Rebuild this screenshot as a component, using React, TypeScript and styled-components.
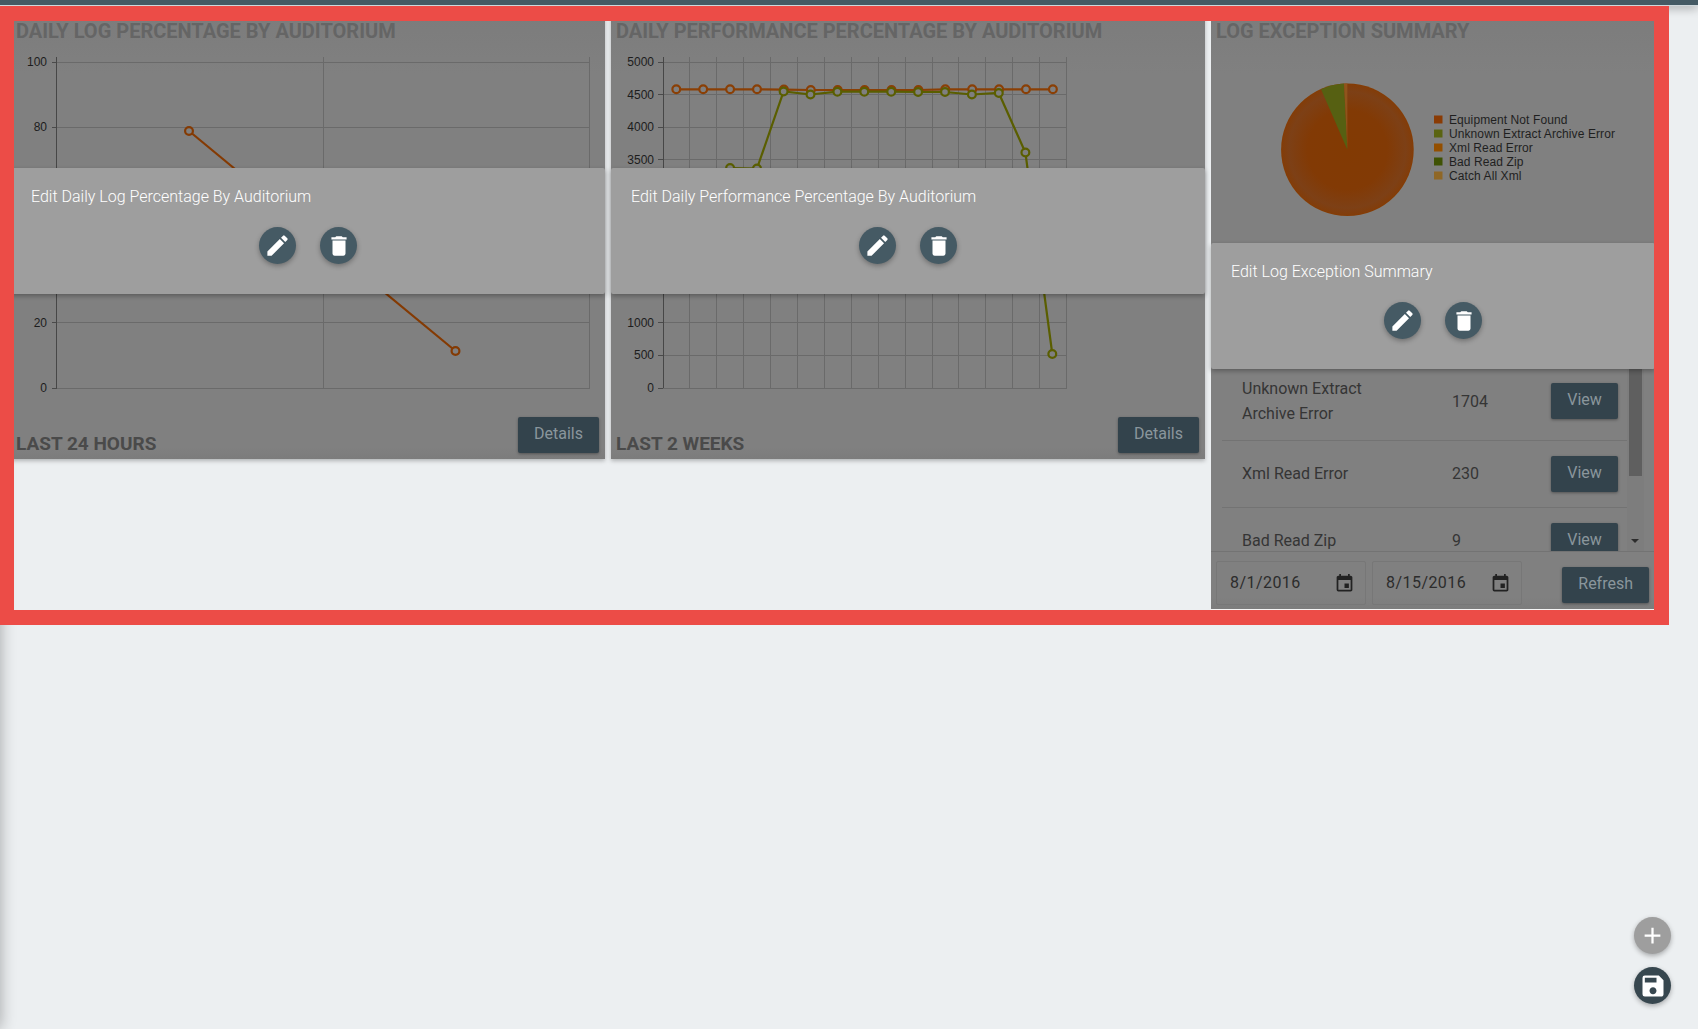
import React from "react";
import styled, { createGlobalStyle } from "styled-components";
import { MdEdit, MdDelete, MdEvent, MdAdd, MdSave } from "react-icons/md";

const Global = createGlobalStyle`
  html, body { margin: 0; padding: 0; height: 100%; overflow: hidden; background: #eceff1; }
  body { font-family: Roboto, "Liberation Sans", sans-serif; }
`;

const Page = styled.div`
  position: relative;
  width: 1698px;
  height: 1029px;
  overflow: hidden;
`;
const HiddenDrawer = styled.aside`
  position: absolute;
  top: 0;
  left: -16px;
  width: 16px;
  height: 100%;
  box-shadow: 0 0 16px rgba(0, 0, 0, 0.32);
`;
const TopBar = styled.header`
  position: relative;
  z-index: 2;
  height: 5px;
  background: #455a64;
  border-bottom: 1px solid #cfd8dc;
  box-shadow: 0 2px 10px rgba(0, 0, 0, 0.35);
`;
const Board = styled.main`
  display: grid;
  grid-template-columns: 594px 594px 444px;
  column-gap: 6px;
  align-items: start;
  margin-top: -3px;
  padding-left: 11px;
`;
const Card = styled.section<{ $h: number; $line?: boolean }>`
  position: relative;
  display: flex;
  flex-direction: column;
  height: ${(p) => p.$h}px;
  box-sizing: border-box;
  background: linear-gradient(#7b7b7b 0, #808080 70px, #808080 calc(100% - 12px), #7c7c7c 100%);
  box-shadow: ${(p) => (p.$line ? "0 1px 0 #f4f4f4" : "0 2px 4px rgba(0, 0, 0, 0.25)")};
`;
const Title = styled.h2`
  margin: 0;
  padding: 16px 5px 7px;
  font-size: 20px;
  line-height: 24px;
  font-weight: 700;
  color: #656565;
  text-transform: uppercase;
  white-space: nowrap;
`;
const ChartSvg = styled.svg`
  display: block;
  flex: none;
  font-family: "Liberation Sans", Arial, sans-serif;
  font-size: 12px;
`;
const CardFoot = styled.div`
  flex: 1;
  display: flex;
  justify-content: space-between;
  padding: 17px 6px 6px 5px;
`;
const Period = styled.div`
  align-self: flex-end;
  margin-bottom: -3px;
  font-size: 19px;
  line-height: 24px;
  font-weight: 700;
  color: #4a4a4a;
  text-transform: uppercase;
`;
const ActionButton = styled.button`
  flex: none;
  height: 36px;
  padding: 0 16px 2px;
  border: 0;
  border-radius: 2px;
  background: #33434c;
  color: #8a969c;
  font: 400 16px/34px Roboto, sans-serif;
  box-shadow: 0 1px 3px rgba(0, 0, 0, 0.35);
`;
const EditOverlay = styled.div`
  position: absolute;
  left: 0;
  right: 0;
  top: 50%;
  transform: translateY(-50%);
  height: 126px;
  background: #9e9e9e;
  border-radius: 2px;
  box-shadow: 0 2px 5px rgba(0, 0, 0, 0.3);
  color: #fff;
`;
const EditTitle = styled.div`
  padding: 19px 20px 0;
  font-size: 16px;
  line-height: 19px;
  font-weight: 300;
`;
const EditActions = styled.div`
  display: flex;
  justify-content: center;
  gap: 24px;
  margin-top: 21px;
`;
const RoundButton = styled.button<{ $bg?: string }>`
  display: flex;
  align-items: center;
  justify-content: center;
  width: 37px;
  height: 37px;
  padding: 0;
  border: 0;
  border-radius: 50%;
  background: ${(p) => p.$bg || "#455a64"};
  color: #fff;
  box-shadow: 0 2px 5px rgba(0, 0, 0, 0.3);
`;
const Exceptions = styled.div`
  flex: 1;
  min-height: 0;
  display: flex;
  overflow: hidden;
  padding: 0 11px;
`;
const Rows = styled.div`
  width: 405px;
  margin-top: -8px;
`;
const Row = styled.div`
  display: grid;
  grid-template-columns: 210px 99px 67px;
  align-items: center;
  padding: 15px 9px 15px 20px;
  border-bottom: 1px solid #737373;
  font-size: 16px;
  line-height: 25px;
  color: #353535;
  &:first-child { padding-bottom: 14px; }
  &:not(:first-child) > span { padding-bottom: 2px; }
`;
const RowName = styled.span`
  max-width: 140px;
`;
const ScrollTrack = styled.div`
  position: relative;
  width: 17px;
  background: #7d7d7d;
`;
const ScrollThumb = styled.div`
  margin: 0 2px;
  height: 107px;
  background: #5f5f5f;
`;
const ScrollArrow = styled.div`
  position: absolute;
  left: 4px;
  bottom: 8px;
  border: 4px solid transparent;
  border-top: 4px solid #2c2c2c;
  border-bottom: 0;
`;
const RangeBar = styled.div`
  flex: none;
  height: 58px;
  box-sizing: border-box;
  display: flex;
  gap: 6px;
  padding: 9px 6px 0 5px;
  border-top: 1px solid #737373;
`;
const DateField = styled.div`
  display: flex;
  align-items: center;
  justify-content: space-between;
  width: 150px;
  height: 44px;
  box-sizing: border-box;
  padding: 0 10px 2px 13px;
  border: 1px solid #777;
  border-radius: 2px;
  font-size: 16px;
  color: #2c2c2c;
  letter-spacing: 0.45px;
  svg { margin-top: 3px; color: #222; }
`;
const RefreshSlot = styled.div`
  margin-left: auto;
  padding-top: 6px;
`;
const Frame = styled.div`
  position: absolute;
  z-index: 3;
  top: 6px;
  left: 0;
  width: 1669px;
  height: 619px;
  box-sizing: border-box;
  border-style: solid;
  border-color: #ec4c47;
  border-width: 15px 15px 15px 14px;
  pointer-events: none;
`;
const FabStack = styled.div`
  position: absolute;
  left: 1634px;
  top: 917px;
  display: flex;
  flex-direction: column;
  gap: 13px;
`;

const ORANGE = "#843a03";
const GREEN = "#5a5e00";

function Overlay({ title }: { title: string }) {
  return (
    <EditOverlay>
      <EditTitle>{title}</EditTitle>
      <EditActions>
        <RoundButton aria-label="Edit"><MdEdit size={27} /></RoundButton>
        <RoundButton aria-label="Delete"><MdDelete size={26} /></RoundButton>
      </EditActions>
    </EditOverlay>
  );
}

function Grid({ x0, x1, vs, labels, labelX }: { x0: number; x1: number; vs: number[]; labels: string[]; labelX: number }) {
  const step = 326 / (labels.length - 1);
  return (
    <g>
      {labels.map((l, i) => {
        const y = 62 + i * step;
        return (
          <g key={i}>
            <line x1={x0} x2={x1} y1={y} y2={y} stroke="#6a6a6a" shapeRendering="crispEdges" />
            <line x1={x0 - 5} x2={x0} y1={y} y2={y} stroke="#4a4a4a" shapeRendering="crispEdges" />
            {l && <text x={labelX} y={y + 4} textAnchor="end" fill="#1d1d1d">{l}</text>}
          </g>
        );
      })}
      {vs.map((v) => (
        <line key={v} x1={v} x2={v} y1={57} y2={388} stroke="#6a6a6a" shapeRendering="crispEdges" />
      ))}
      <line x1={x0} x2={x0} y1={57} y2={388} stroke="#474747" shapeRendering="crispEdges" />
    </g>
  );
}

function Series({ pts, color }: { pts: number[][]; color: string }) {
  return (
    <g>
      <polyline points={pts.map((p) => p.join(",")).join(" ")} fill="none" stroke={color} strokeWidth={2.2} />
      {pts.map((p) => (
        <circle key={p[0]} cx={p[0]} cy={p[1]} r={3.9} fill="#7f7f7f" stroke={color} strokeWidth={2.2} />
      ))}
    </g>
  );
}

const orangeYs = [89.3, 89.3, 89.3, 89.3, 89.6, 90, 90, 90, 90, 90, 89.3, 89.3, 89.3, 89.3, 89.3];
const orangePts = orangeYs.map((y, i) => [676.3 + i * 26.9, y]);
const greenPts = [
  [730.1, 168], [757, 168.5], [783.6, 91.5], [810.5, 94.5], [837.4, 91.7], [864.3, 91.7], [891.2, 91.7],
  [918.1, 92], [945, 92], [971.9, 94.5], [998.8, 93], [1025.4, 152.5], [1052.3, 354],
];

const legend = [
  ["Equipment Not Found", "#8a3b04"],
  ["Unknown Extract Archive Error", "#5a6412"],
  ["Xml Read Error", "#934f00"],
  ["Bad Read Zip", "#3f5204"],
  ["Catch All Xml", "#8f6726"],
];

const rows = [
  { name: "Unknown Extract Archive Error", count: "1704" },
  { name: "Xml Read Error", count: "230" },
  { name: "Bad Read Zip", count: "9" },
];

export default function App() {
  return (
    <Page>
      <Global />
      <HiddenDrawer />
      <TopBar />
      <Board>
        <Card $h={456}>
          <Title>Daily Log Percentage By Auditorium</Title>
          <ChartSvg width={594} height={350} viewBox="11 50 594 350">
            <Grid x0={56.5} x1={589.5} vs={[323.5, 589.5]} labels={["100", "80", "", "", "20", "0"]} labelX={47} />
            <Series pts={[[189, 131], [455.5, 351]]} color={ORANGE} />
          </ChartSvg>
          <CardFoot>
            <Period>Last 24 Hours</Period>
            <ActionButton>Details</ActionButton>
          </CardFoot>
          <Overlay title="Edit Daily Log Percentage By Auditorium" />
        </Card>
        <Card $h={456}>
          <Title>Daily Performance Percentage By Auditorium</Title>
          <ChartSvg width={594} height={350} viewBox="611 50 594 350">
            <Grid
              x0={663}
              x1={1066.5}
              vs={Array.from({ length: 15 }, (_, i) => 689.9 + i * 26.9)}
              labels={["5000", "4500", "4000", "3500", "", "", "", "", "1000", "500", "0"]}
              labelX={654}
            />
            <Series pts={orangePts} color="#8a3f05" />
            <Series pts={greenPts} color={GREEN} />
          </ChartSvg>
          <CardFoot>
            <Period>Last 2 Weeks</Period>
            <ActionButton>Details</ActionButton>
          </CardFoot>
          <Overlay title="Edit Daily Performance Percentage By Auditorium" />
        </Card>
        <Card $h={606} $line>
          <Title>Log Exception Summary</Title>
          <ChartSvg width={444} height={319} viewBox="1211 50 444 319">
            <defs>
              <radialGradient id="pieShade">
                <stop offset="0" stopColor="#823a03" />
                <stop offset="0.6" stopColor="#823a05" />
                <stop offset="0.88" stopColor="#7d4016" />
                <stop offset="0.98" stopColor="#823d0a" />
                <stop offset="1" stopColor="#863b00" />
              </radialGradient>
            </defs>
            <circle cx={1347.4} cy={149.8} r={66.3} fill="url(#pieShade)" />
            <path d="M1347.4 149.8 L1321 89.3 A66.3 66.3 0 0 1 1344 83.6 Z" fill="#566012" />
            <path d="M1347.4 149.8 L1344 83.6 A66.3 66.3 0 0 1 1347.4 83.5 Z" fill="#90541c" />
            {legend.map(([t, c], i) => (
              <g key={t}>
                <rect x={1434} y={115.5 + i * 14} width={8.5} height={8} fill={c} />
                <text x={1449} y={124 + i * 14} fill="#1f1f1f" letterSpacing={0.09}>{t}</text>
              </g>
            ))}
          </ChartSvg>
          <Exceptions>
            <Rows>
              {rows.map((r) => (
                <Row key={r.name}>
                  <RowName>{r.name}</RowName>
                  <span>{r.count}</span>
                  <ActionButton>View</ActionButton>
                </Row>
              ))}
            </Rows>
            <ScrollTrack>
              <ScrollThumb />
              <ScrollArrow />
            </ScrollTrack>
          </Exceptions>
          <RangeBar>
            <DateField>8/1/2016<MdEvent size={21} /></DateField>
            <DateField>8/15/2016<MdEvent size={21} /></DateField>
            <RefreshSlot><ActionButton>Refresh</ActionButton></RefreshSlot>
          </RangeBar>
          <Overlay title="Edit Log Exception Summary" />
        </Card>
      </Board>
      <Frame />
      <FabStack>
        <RoundButton $bg="#9e9e9e" aria-label="Add"><MdAdd size={27} /></RoundButton>
        <RoundButton $bg="#37474f" aria-label="Save"><MdSave size={28} /></RoundButton>
      </FabStack>
    </Page>
  );
}
